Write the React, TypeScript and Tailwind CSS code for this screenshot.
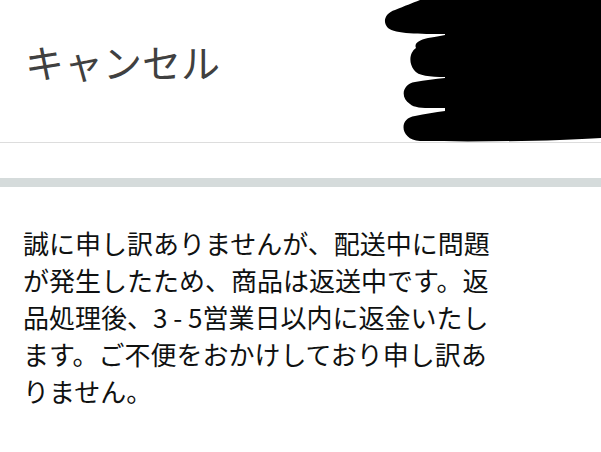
import React from "react";

const lines = [
  "誠に申し訳ありませんが、配送中に問題",
  "が発生したため、商品は返送中です。返",
  "品処理後、3 - 5営業日以内に返金いたし",
  "ます。ご不便をおかけしており申し訳あ",
  "りません。",
];

export default function App() {
  return (
    <div
      className="w-[601px] h-[452px] bg-white overflow-hidden"
      style={{ fontFamily: '"Noto Sans CJK JP", "Noto Sans", sans-serif' }}
    >
      <div className="relative h-[143px] border-b border-[#dddddd] flex items-center px-[25px]">
        <span className="text-[39px] leading-none text-[#404040] font-normal -mt-[20px]">
          キャンセル
        </span>
        <svg
          className="absolute left-0 top-0"
          width="601"
          height="143"
          viewBox="0 0 601 143"
        >
          <path
            fill="#000"
            d="M 420 0 L 601 0 L 601 138 C 560 141, 480 142, 420 141 C 400 140, 398 118, 415 116 C 425 114, 435 112, 445 111 L 445 108 C 430 108, 415 109, 410 104 C 400 98, 402 84, 415 82 C 425 80, 435 79, 445 78 L 445 77 C 430 77, 418 76, 414 70 C 408 62, 410 52, 416 48 C 414 44, 418 40, 428 38 C 435 37, 440 36, 445 35 L 445 34 C 420 34, 395 34, 388 28 C 382 22, 385 13, 395 10 C 405 6, 412 3, 420 0 Z"
          />
        </svg>
      </div>
      <div className="h-[35px]" />
      <div className="h-[9px] bg-[#d5dbdb]" />
      <div className="px-[23px] pt-[37px] text-[26px] leading-[37px] text-[#0f1111]">
        {lines.map((l, i) => (
          <div key={i} className="whitespace-nowrap">
            {l}
          </div>
        ))}
      </div>
    </div>
  );
}
